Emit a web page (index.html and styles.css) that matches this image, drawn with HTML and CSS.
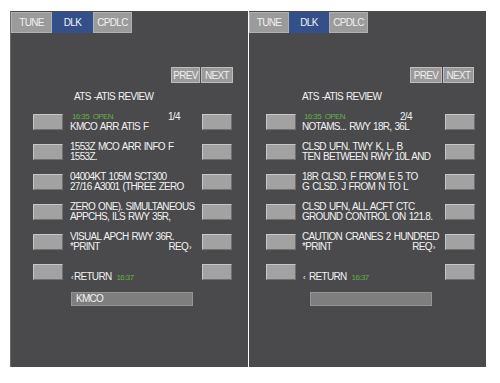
FILE: index.html
```html
<!DOCTYPE html>
<html lang="en">
<head>
  <meta charset="UTF-8" />
  <title>ATS ATIS Review</title>
  <link rel="stylesheet" href="styles.css">
</head>
<body>
  <div class="screens">

    <!-- Page 1 of 4 -->
    <section class="mcdu mcdu-left">
      <nav class="tabs">
        <span class="tab">TUNE</span>
        <span class="tab active">DLK</span>
        <span class="tab">CPDLC</span>
      </nav>
      <div class="body">
        <div class="pager">
          <span class="pbtn prev">PREV</span>
          <span class="pbtn next">NEXT</span>
        </div>
        <div class="title">ATS -ATIS REVIEW</div>
        <div class="rows">
          <span class="key"></span>
          <div class="lines">
            <div class="line head"><span class="stamp">16:35 OPEN</span><span>1/4</span></div>
            <div class="line">KMCO ARR ATIS F</div>
          </div>
          <span class="key"></span>

          <span class="key"></span>
          <div class="lines">
            <div class="line">1553Z MCO ARR INFO F</div>
            <div class="line">1553Z.</div>
          </div>
          <span class="key"></span>

          <span class="key"></span>
          <div class="lines">
            <div class="line">04004KT 105M SCT300</div>
            <div class="line">27/16 A3001 (THREE ZERO</div>
          </div>
          <span class="key"></span>

          <span class="key"></span>
          <div class="lines">
            <div class="line">ZERO ONE). SIMULTANEOUS</div>
            <div class="line">APPCHS, ILS RWY 35R,</div>
          </div>
          <span class="key"></span>

          <span class="key"></span>
          <div class="lines">
            <div class="line">VISUAL APCH RWY 36R.</div>
            <div class="line split"><span>*PRINT</span><span>REQ<small class="arrow">&rsaquo;</small></span></div>
          </div>
          <span class="key"></span>

          <span class="key"></span>
          <div class="lines">
            <div class="line"></div>
            <div class="line"><small class="arrow">&lsaquo;</small>RETURN <span class="time">16:37</span></div>
          </div>
          <span class="key"></span>
        </div>
        <div class="entry">KMCO</div>
      </div>
    </section>

    <!-- Page 2 of 4 -->
    <section class="mcdu mcdu-right">
      <nav class="tabs">
        <span class="tab">TUNE</span>
        <span class="tab active">DLK</span>
        <span class="tab">CPDLC</span>
      </nav>
      <div class="body">
        <div class="pager">
          <span class="pbtn prev">PREV</span>
          <span class="pbtn next">NEXT</span>
        </div>
        <div class="title">ATS -ATIS REVIEW</div>
        <div class="rows">
          <span class="key"></span>
          <div class="lines">
            <div class="line head"><span class="stamp">16:35 OPEN</span><span>2/4</span></div>
            <div class="line">NOTAMS... RWY 18R, 36L</div>
          </div>
          <span class="key"></span>

          <span class="key"></span>
          <div class="lines">
            <div class="line">CLSD UFN. TWY K, L, B</div>
            <div class="line">TEN BETWEEN RWY 10L AND</div>
          </div>
          <span class="key"></span>

          <span class="key"></span>
          <div class="lines">
            <div class="line">18R CLSD. F FROM E 5 TO</div>
            <div class="line">G CLSD. J FROM N TO L</div>
          </div>
          <span class="key"></span>

          <span class="key"></span>
          <div class="lines">
            <div class="line">CLSD UFN, ALL ACFT CTC</div>
            <div class="line">GROUND CONTROL ON 121.8.</div>
          </div>
          <span class="key"></span>

          <span class="key"></span>
          <div class="lines">
            <div class="line">CAUTION CRANES 2 HUNDRED</div>
            <div class="line split"><span>*PRINT</span><span>REQ<small class="arrow">&rsaquo;</small></span></div>
          </div>
          <span class="key"></span>

          <span class="key"></span>
          <div class="lines">
            <div class="line"></div>
            <div class="line"><small class="arrow">&lsaquo;</small> RETURN <span class="time">16:37</span></div>
          </div>
          <span class="key"></span>
        </div>
        <div class="entry"></div>
      </div>
    </section>

  </div>
</body>
</html>
```

FILE: styles.css
```css
/* Shared styles */
* {
  margin: 0;
  padding: 0;
  box-sizing: border-box;
}

body {
  background: #ffffff;
  font-family: "Liberation Sans", Arial, sans-serif;
  font-size: 10px;
  letter-spacing: -0.7px;
  word-spacing: 1px;
  color: #f2f2f2;
}

.screens {
  display: flex;
  gap: 1px;
  padding: 11px 0 0 10px;
}

/* One display unit */
.mcdu {
  height: 356px;
  background: #4a4a4c;
  border-left: 1px solid #6c6c6e;
}

.mcdu-left {
  width: 238px;
}

.mcdu-right {
  width: 237px;
  border-left: none;
}

/* Tabs */
.tabs {
  display: flex;
  margin-top: 1px;
  height: 21px;
}

.tab {
  width: 41px;
  display: flex;
  align-items: center;
  justify-content: center;
  background: #9b9b9b;
  border: 1px solid #b0b0b0;
  color: #f0f0f0;
}

.tab:last-child {
  width: 39px;
}

.tab.active {
  background: #34508b;
  border-color: #34508b;
}

.mcdu-right .tab {
  width: 40px;
}

.mcdu-right .tab:last-child {
  width: 39px;
}

/* Body with line select keys */
.body {
  padding: 0 16px 0 22px;
}

.mcdu-right .body {
  padding: 0 13px 0 17px;
}

.pager {
  display: flex;
  justify-content: flex-end;
  gap: 1px;
  margin-top: 34px;
  margin-right: -1px;
}

.pbtn {
  height: 16px;
  display: flex;
  align-items: center;
  justify-content: center;
  background: #9a9a9a;
  border: 1px solid #bdbdbd;
  color: #eeeeee;
}

.pbtn.prev { width: 29px; }
.pbtn.next { width: 32px; }

.mcdu-right .pbtn.prev { width: 32px; }
.mcdu-right .pbtn.next { width: 31px; }

.title {
  margin-top: 9px;
  line-height: 10px;
  padding-left: 41px;
}

.mcdu-right .title {
  padding-left: 36px;
}

.rows {
  display: grid;
  grid-template-columns: 30px 1fr 30px;
  column-gap: 7px;
  row-gap: 10px;
  align-items: center;
  margin-top: 10px;
}

.mcdu-right .rows {
  column-gap: 6px;
}

.key {
  height: 16px;
  background: #a2a2a2;
  border: 1px solid;
  border-color: #c6c6c6 #707070 #707070 #c6c6c6;
}

.lines {
  height: 20px;
}

.line {
  height: 10px;
  line-height: 10px;
  white-space: nowrap;
}

.head {
  display: flex;
}

.stamp {
  width: 98px;
  padding-left: 2px;
  font-size: 8px;
  letter-spacing: -0.6px;
  word-spacing: 2px;
  color: #62b046;
}

.split {
  display: flex;
  justify-content: space-between;
  padding-right: 3px;
}

.arrow {
  font-size: 8px;
  margin: 0 1px;
}

.time {
  font-size: 8px;
  letter-spacing: -0.6px;
  color: #62b046;
  margin-left: 2px;
}

/* Scratchpad */
.entry {
  width: 122px;
  height: 14px;
  margin: 10px 0 0 38px;
  padding-left: 4px;
  line-height: 12px;
  background: #7e7e7e;
  border: 1px solid #959595;
}

.mcdu-right .entry {
  margin-left: 44px;
}
```
